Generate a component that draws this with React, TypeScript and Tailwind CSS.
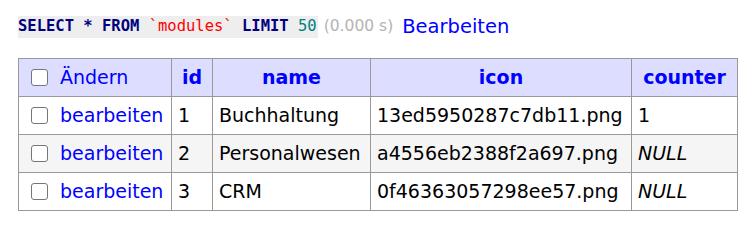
const rows = [
  { id: '1', name: 'Buchhaltung', icon: '13ed5950287c7db11.png', counter: '1' },
  { id: '2', name: 'Personalwesen', icon: 'a4556eb2388f2a697.png', counter: null },
  { id: '3', name: 'CRM', icon: '0f46363057298ee57.png', counter: null },
];

function Check() {
  return <span className="inline-block w-[17px] h-[17px] shrink-0 rounded-[3px] border-[1.5px] border-[#767676] bg-white" />;
}

export default function App() {
  return (
    <div className="bg-white w-[756px] h-[232px] text-black" style={{ fontFamily: '"DejaVu Sans", Verdana, sans-serif' }}>
      <div className="flex items-center h-[22px] pt-[16px] pl-[18px] box-content">
        <code
          className="bg-[#eee] h-[22px] flex items-center text-[15.5px] pr-[1px] font-bold"
          style={{ fontFamily: '"DejaVu Sans Mono", "Liberation Mono", monospace' }}
        >
          <span className="text-[#000080]">SELECT</span>
          <span className="text-[#000080]">&nbsp;*&nbsp;</span>
          <span className="text-[#000080]">FROM</span>
          <span>&nbsp;</span>
          <span className="text-[#f00] font-normal">`modules`</span>
          <span>&nbsp;</span>
          <span className="text-[#000080]">LIMIT</span>
          <span>&nbsp;</span>
          <span className="text-[#008080] font-normal">50</span>
        </code>
        <span className="text-[#b4b4b4] text-[15.5px] ml-[6px]">(0.000 s)</span>
        <a className="text-[#00f] text-[19.5px] ml-[9px]">Bearbeiten</a>
      </div>
      <table className="border-collapse table-fixed ml-[18px] mt-[20px] w-[719px] text-[19px]">
        <colgroup>
          <col className="w-[153px]" />
          <col className="w-[41px]" />
          <col className="w-[158px]" />
          <col className="w-[261px]" />
          <col className="w-[106px]" />
        </colgroup>
        <thead>
          <tr className="bg-[#ddf] h-[38px]">
            <td className="border border-[#999] px-[6px]">
              <div className="flex items-center gap-[12px] pl-[6px]">
                <Check />
                <a className="text-[#00f]">Ändern</a>
              </div>
            </td>
            {['id', 'name', 'icon', 'counter'].map((h) => (
              <th key={h} className="border border-[#999] px-[6px] text-center font-bold text-[#00f]">
                {h}
              </th>
            ))}
          </tr>
        </thead>
        <tbody>
          {rows.map((r, i) => (
            <tr key={r.id} className={`h-[38px] ${i % 2 === 1 ? 'bg-[#f5f5f5]' : 'bg-white'}`}>
              <td className="border border-[#999] px-[6px]">
                <div className="flex items-center gap-[12px] pl-[6px]">
                  <Check />
                  <a className="text-[#00f]">bearbeiten</a>
                </div>
              </td>
              <td className="border border-[#999] px-[6px]">{r.id}</td>
              <td className="border border-[#999] px-[6px]">{r.name}</td>
              <td className="border border-[#999] px-[6px] whitespace-nowrap">{r.icon}</td>
              <td className="border border-[#999] px-[6px]">
                {r.counter ?? <i>NULL</i>}
              </td>
            </tr>
          ))}
        </tbody>
      </table>
    </div>
  );
}
